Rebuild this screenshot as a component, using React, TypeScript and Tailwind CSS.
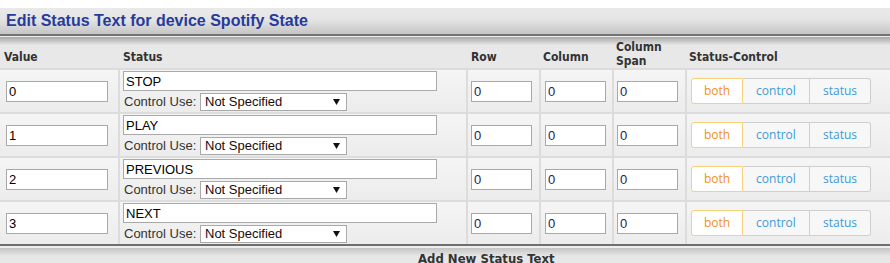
const rows = [
  { v: "0", s: "STOP" },
  { v: "1", s: "PLAY" },
  { v: "2", s: "PREVIOUS" },
  { v: "3", s: "NEXT" },
];

const cols = "grid grid-cols-[118px_346px_71px_71px_71px_203px] gap-x-[2px]";
const cell = "bg-[linear-gradient(#f5f5f5,#ececec)]";
const hdr = "font-['DejaVu_Sans_Condensed','DejaVu_Sans',sans-serif] font-bold text-[12px] text-[#333333] leading-[14px]";

function SmallInput({ v }: { v: string }) {
  return (
    <input
      readOnly
      value={v}
      className="w-[61px] h-[21px] border border-[#a9a9a9] bg-white px-[2px] text-[13px] text-[#2a1660] font-['Liberation_Sans',sans-serif] outline-none"
    />
  );
}

export default function App() {
  return (
    <div className="w-[890px] h-[263px] overflow-hidden bg-white font-['Liberation_Sans',sans-serif]">
      <div className="h-[8px]" />
      <div className="h-[26px] bg-[linear-gradient(#e9e9e9,#e4e4e4_45%,#c5c5c5)] pl-[6px] flex items-center text-[16px] font-bold text-[#263b9c] leading-none">
        Edit Status Text for device Spotify State
      </div>
      <div className="h-[2px] bg-[#737373]" />
      <div className="h-[1px] bg-[#eeeeee]" />
      <div className="h-[8px] bg-[linear-gradient(#a6a6a6,#e6e6e6)]" />
      <div className={`${cols} h-[23px] bg-[#e8e8e8] ${hdr}`}>
        <div className="pl-[4px] flex items-center">Value</div>
        <div className="pl-[3px] flex items-center">Status</div>
        <div className="pl-[3px] flex items-center">Row</div>
        <div className="pl-[2px] flex items-center">Column</div>
        <div className="pl-[2px] flex items-center -mt-[5px]">
          Column
          <br />
          Span
        </div>
        <div className="pl-[2px] flex items-center">Status-Control</div>
      </div>
      <div className={`${cols} gap-y-[2px] bg-[#dcdcdc] pt-[2px]`}>
        {rows.map((r) => (
          <div key={r.v} className="contents">
            <div className={`${cell} h-[42px] flex items-center pl-[6px]`}>
              <input
                readOnly
                value={r.v}
                className="w-[102px] h-[21px] border border-[#a9a9a9] bg-white px-[2px] text-[13px] text-black outline-none"
              />
            </div>
            <div className={`${cell} h-[42px] pl-[3px] pt-[1px]`}>
              <input
                readOnly
                value={r.s}
                className="block w-[314px] h-[20px] border border-[#a9a9a9] bg-white px-[2px] text-[13px] text-black outline-none"
              />
              <div className="flex items-center mt-[1px] text-[13px] text-[#333333]">
                <span className="w-[77px] pl-[1px]">Control Use:</span>
                <div className="w-[147px] h-[18px] border border-[#a9a9a9] bg-white flex items-center justify-between pl-[4px] pr-[6px] text-[13px] text-[#1a0a0a]">
                  <span>Not Specified</span>
                  <svg width="7" height="6" viewBox="0 0 7 6">
                    <path d="M0 0H7L3.5 6Z" fill="#111" />
                  </svg>
                </div>
              </div>
            </div>
            <div className={`${cell} h-[42px] flex items-center pl-[3px]`}>
              <SmallInput v="0" />
            </div>
            <div className={`${cell} h-[42px] flex items-center pl-[4px]`}>
              <SmallInput v="0" />
            </div>
            <div className={`${cell} h-[42px] flex items-center pl-[3px]`}>
              <SmallInput v="0" />
            </div>
            <div className={`${cell} h-[42px] flex items-center pl-[4px]`}>
              <div className="flex h-[26px] font-['Open_Sans',sans-serif] text-[12px]">
                <div className="w-[52px] flex items-center justify-center border border-[#f5d27a] bg-white text-[#f0901e] rounded-l-[3px]">
                  both
                </div>
                <div className="w-[67px] flex items-center justify-center border-y border-r border-[#cfcfcf] bg-[#f7f7f7] text-[#3d9ad6]">
                  control
                </div>
                <div className="w-[61px] flex items-center justify-center border-y border-r border-[#cfcfcf] bg-[#f7f7f7] text-[#3d9ad6] rounded-r-[3px]">
                  status
                </div>
              </div>
            </div>
          </div>
        ))}
      </div>
      <div className="h-[2px] bg-[#6f6f6f]" />
      <div className="h-[2px] bg-[#eeeeee]" />
      <div className="h-[30px] bg-[linear-gradient(#c4c4c4,#e6e6e6_8px,#ececec)] flex pl-[418px] pt-[4px]">
        <span className={`${hdr} text-[13px]`}>Add New Status Text</span>
      </div>
    </div>
  );
}
